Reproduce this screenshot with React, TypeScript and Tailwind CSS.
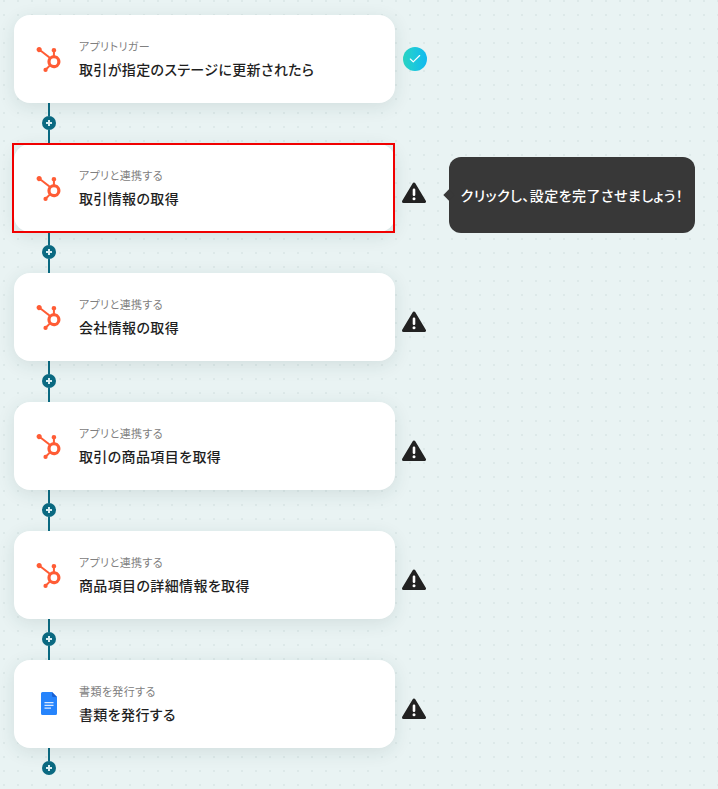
import React from 'react';
import { SiHubspot } from 'react-icons/si';
import { Check } from 'lucide-react';

interface Step {
  label: string;
  title: string;
  app: 'hubspot' | 'docs';
  status: 'done' | 'warning';
}

const steps: Step[] = [
  { label: 'アプリトリガー', title: '取引が指定のステージに更新されたら', app: 'hubspot', status: 'done' },
  { label: 'アプリと連携する', title: '取引情報の取得', app: 'hubspot', status: 'warning' },
  { label: 'アプリと連携する', title: '会社情報の取得', app: 'hubspot', status: 'warning' },
  { label: 'アプリと連携する', title: '取引の商品項目を取得', app: 'hubspot', status: 'warning' },
  { label: 'アプリと連携する', title: '商品項目の詳細情報を取得', app: 'hubspot', status: 'warning' },
  { label: '書類を発行する', title: '書類を発行する', app: 'docs', status: 'warning' },
];

function DocsIcon() {
  return (
    <svg width="16" height="23" viewBox="0 0 16 23" className="-mt-[1px]">
      <path d="M1.500 0H11l5 5v16.500a1.500 1.500 0 0 1-1.500 1.500h-13A1.500 1.500 0 0 1 0 21.500v-20A1.500 1.500 0 0 1 1.500 0z" fill="#2684fc" />
      <path d="M11 0l5 5h-3.800A1.200 1.200 0 0 1 11 3.800z" fill="#1a5fd0" />
      <path d="M3.500 10h9v1.200h-9zM3.500 12.800h9V14h-9zM3.500 15.600h6.500v1.200H3.500z" fill="#dbe9ff" />
    </svg>
  );
}

function WarningIcon() {
  return (
    <svg width="24" height="22" viewBox="0 0 24 22">
      <path
        d="M12 2 L22.500 19.500 H1.500 Z"
        fill="#222222"
        stroke="#222222"
        strokeWidth="3"
        strokeLinejoin="round"
      />
      <rect x="10.700" y="6.500" width="2.600" height="7.500" rx="1.200" fill="#ffffff" />
      <circle cx="12" cy="16.800" r="1.500" fill="#ffffff" />
    </svg>
  );
}

function Connector({ last }: { last: boolean }) {
  return (
    <div className="flex h-[41px] w-[70px] flex-col items-center">
      <div className="h-[13px] w-[2px] bg-[#0b6a82]" />
      <div className="flex size-[14px] shrink-0 items-center justify-center rounded-full bg-[#0b6a82]">
        <div className="relative size-[6px]">
          <div className="absolute left-[2.250px] top-0 h-[6px] w-[1.500px] bg-[#dbeef2]" />
          <div className="absolute left-0 top-[2.250px] h-[1.500px] w-[6px] bg-[#dbeef2]" />
        </div>
      </div>
      {!last && <div className="w-[2px] flex-1 bg-[#0b6a82]" />}
    </div>
  );
}

function StepCard({ step, selected }: { step: Step; selected: boolean }) {
  return (
    <div className="relative flex h-[88px] w-[381px] items-center rounded-2xl bg-white shadow-[0_4px_18px_rgba(30,60,60,0.11)]">
      {selected && <div className="absolute -bottom-px -left-[2px] -top-px right-0 border-2 border-[#f00000]" />}
      <div className="flex w-[65px] shrink-0 justify-center pl-[5px] pr-[1px]">
        {step.app === 'hubspot' ? <SiHubspot size={25} color="#ff5c35" /> : <DocsIcon />}
      </div>
      <div className="flex flex-col pb-[1px]">
        <span className="text-[11px] leading-[16px] tracking-[0.4px] text-[#808080] [font-feature-settings:'palt']">{step.label}</span>
        <span className="mt-[5px] text-sm leading-[20px] font-medium tracking-[0.37px] text-[#1f1f1f] [font-feature-settings:'palt']">{step.title}</span>
      </div>
    </div>
  );
}

export default function App() {
  return (
    <div className="h-[789px] w-[718px] overflow-hidden bg-[#e9f3f3] bg-[radial-gradient(circle_at_4px_1px,#dde9e9_1.400px,transparent_1.400px)] bg-[size:14px_14px] pl-[14px] pt-[15px] font-['Noto_Sans_CJK_JP','Noto_Sans',sans-serif]">
      {steps.map((step, index) => (
        <div key={index}>
          <div className="relative flex h-[88px] items-center">
            <StepCard step={step} selected={index === 1} />
            {step.status === 'done' ? (
              <div className="ml-[8px] flex size-6 items-center justify-center rounded-full bg-gradient-to-r from-[#2bd6c4] to-[#12b8f0]">
                <Check size={14} color="#ffffff" strokeWidth={2} />
              </div>
            ) : (
              <div className="ml-[7px] mt-[10px] flex">
                <WarningIcon />
              </div>
            )}
            {index === 1 && (
              <div className="absolute left-[435px] top-[13px] flex h-[76px] w-[246px] items-center justify-center rounded-xl bg-[#383838] text-sm font-medium tracking-[0.45px] whitespace-nowrap text-white [font-feature-settings:'palt']">
                <div className="absolute -left-[4px] top-[34px] size-[8px] rotate-45 bg-[#383838]" />
                クリックし、設定を完了させましょう！
              </div>
            )}
          </div>
          <Connector last={index === steps.length - 1} />
        </div>
      ))}
    </div>
  );
}
